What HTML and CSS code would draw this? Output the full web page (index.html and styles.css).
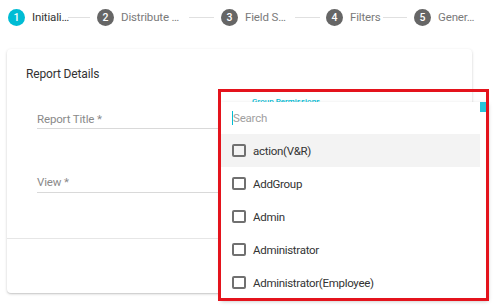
FILE: index.html
```html
<!DOCTYPE html>
<html>
<head>
<meta charset="utf-8">
<link rel="stylesheet" href="styles.css">
</head>
<body>
<div class="stepper">
  <div class="step active"><span class="num">1</span><span class="slabel w36">Initiali…</span></div>
  <div class="connector c22"></div>
  <div class="step"><span class="num">2</span><span class="slabel w68">Distribute …</span></div>
  <div class="connector c25"></div>
  <div class="step"><span class="num">3</span><span class="slabel w50">Field S…</span></div>
  <div class="connector c25 m6"></div>
  <div class="step"><span class="num">4</span><span class="slabel w33">Filters</span></div>
  <div class="connector c24"></div>
  <div class="step"><span class="num">5</span><span class="slabel">Gener…</span></div>
</div>

<div class="card">
  <div class="card-title">Report Details</div>
  <div class="fields">
    <div class="col">
      <div class="field first"><span class="flabel">Report Title *</span></div>
      <div class="field second"><span class="flabel">View *</span></div>
    </div>
    <div class="col">
      <div class="float-label">Group Permissions</div>
      <div class="field"></div>
    </div>
  </div>
  <div class="card-footer"></div>
</div>

<div class="panel">
  <div class="list">
    <div class="search"><span class="caret"></span><span class="placeholder">Search</span></div>
    <div class="option hover"><span class="box"></span><span>action(V&amp;R)</span></div>
    <div class="option"><span class="box"></span><span>AddGroup</span></div>
    <div class="option"><span class="box"></span><span>Admin</span></div>
    <div class="option"><span class="box"></span><span>Administrator</span></div>
    <div class="option"><span class="box"></span><span>Administrator(Employee)</span></div>
  </div>
  <div class="scrollbar"><div class="thumb"></div></div>
</div>
<div class="highlight"></div>
</body>
</html>
```

FILE: styles.css
```css
* { box-sizing: border-box; }
html, body {
  margin: 0;
  padding: 0;
  background: #fff;
  width: 499px;
  height: 307px;
  overflow: hidden;
  font-family: Roboto, "Liberation Sans", sans-serif;
}
body { position: relative; }

.stepper {
  display: flex;
  align-items: center;
  height: 34px;
  padding-left: 8px;
}
.step {
  display: flex;
  align-items: center;
}
.num {
  width: 17px;
  height: 17px;
  border-radius: 50%;
  background: #666;
  color: #fff;
  font-size: 10.5px;
  font-weight: 500;
  display: flex;
  align-items: center;
  justify-content: center;
}
.step.active .num { background: #00bcd4; }
.slabel {
  margin-left: 7px;
  font-size: 11.5px;
  letter-spacing: -0.15px;
  color: #7a7a7a;
  white-space: nowrap;
}
.step.active .slabel { color: #333; }
.w36 { width: 36px; }
.w68 { width: 68px; }
.w50 { width: 50px; }
.w33 { width: 33px; }
.connector {
  height: 1px;
  background: #e0e0e0;
  margin-right: 7px;
}
.connector.m6 { margin-right: 6px; }
.c22 { width: 22px; }
.c24 { width: 24px; }
.c25 { width: 25px; }

.card {
  margin: 15px 0 0 7px;
  width: 465px;
  height: 244px;
  border-radius: 4px;
  background: #fff;
  box-shadow: 0 1px 3px rgba(0,0,0,0.18), 0 1px 1px rgba(0,0,0,0.08);
  display: flex;
  flex-direction: column;
}
.card-title {
  padding: 17px 0 0 19px;
  font-size: 12px;
  letter-spacing: -0.15px;
  line-height: 16px;
  color: #333;
}
.fields {
  display: grid;
  grid-template-columns: 200px 200px;
  column-gap: 15px;
  padding-left: 30px;
  margin-top: 13px;
}
.field {
  border-bottom: 1px solid #d9d9d9;
  padding-bottom: 1px;
}
.field.first { margin-top: 16px; }
.field.second { margin-top: 45px; padding-bottom: 2px; }
.flabel {
  display: block;
  font-size: 11.5px;
  letter-spacing: -0.15px;
  line-height: 16px;
  color: #8a8a8a;
}
.float-label {
  font-size: 8px;
  line-height: 12px;
  color: #00bcd4;
  font-weight: 500;
  padding-top: 1px;
}
.card-footer {
  margin-top: 45px;
  border-top: 1px solid #e6e6e6;
  flex: 1;
}

.panel {
  position: absolute;
  left: 221px;
  top: 102px;
  width: 267px;
  height: 197px;
  background: #fff;
  box-shadow: 0 2px 4px rgba(0,0,0,0.28);
  display: flex;
  overflow: hidden;
}
.list { flex: 1; }
.search {
  height: 32px;
  display: flex;
  align-items: center;
  padding-left: 11px;
}
.caret {
  width: 1px;
  height: 14px;
  background: #00bcd4;
}
.placeholder {
  font-size: 11.5px;
  letter-spacing: -0.2px;
  color: #a0a0a0;
}
.option {
  height: 33px;
  display: flex;
  align-items: center;
  padding-left: 11px;
  font-size: 11.5px;
  letter-spacing: -0.3px;
  color: #333;
}
.option.hover { background: #f3f3f3; }
.box {
  width: 14px;
  height: 13px;
  border: 2px solid #707070;
  border-radius: 2px;
  margin-right: 7px;
}
.scrollbar { width: 8px; }
.thumb {
  height: 10px;
  background: #26c6da;
}

.highlight {
  position: absolute;
  left: 218px;
  top: 89px;
  width: 271px;
  height: 212px;
  border: 3px solid #e4131c;
  pointer-events: none;
}
```
